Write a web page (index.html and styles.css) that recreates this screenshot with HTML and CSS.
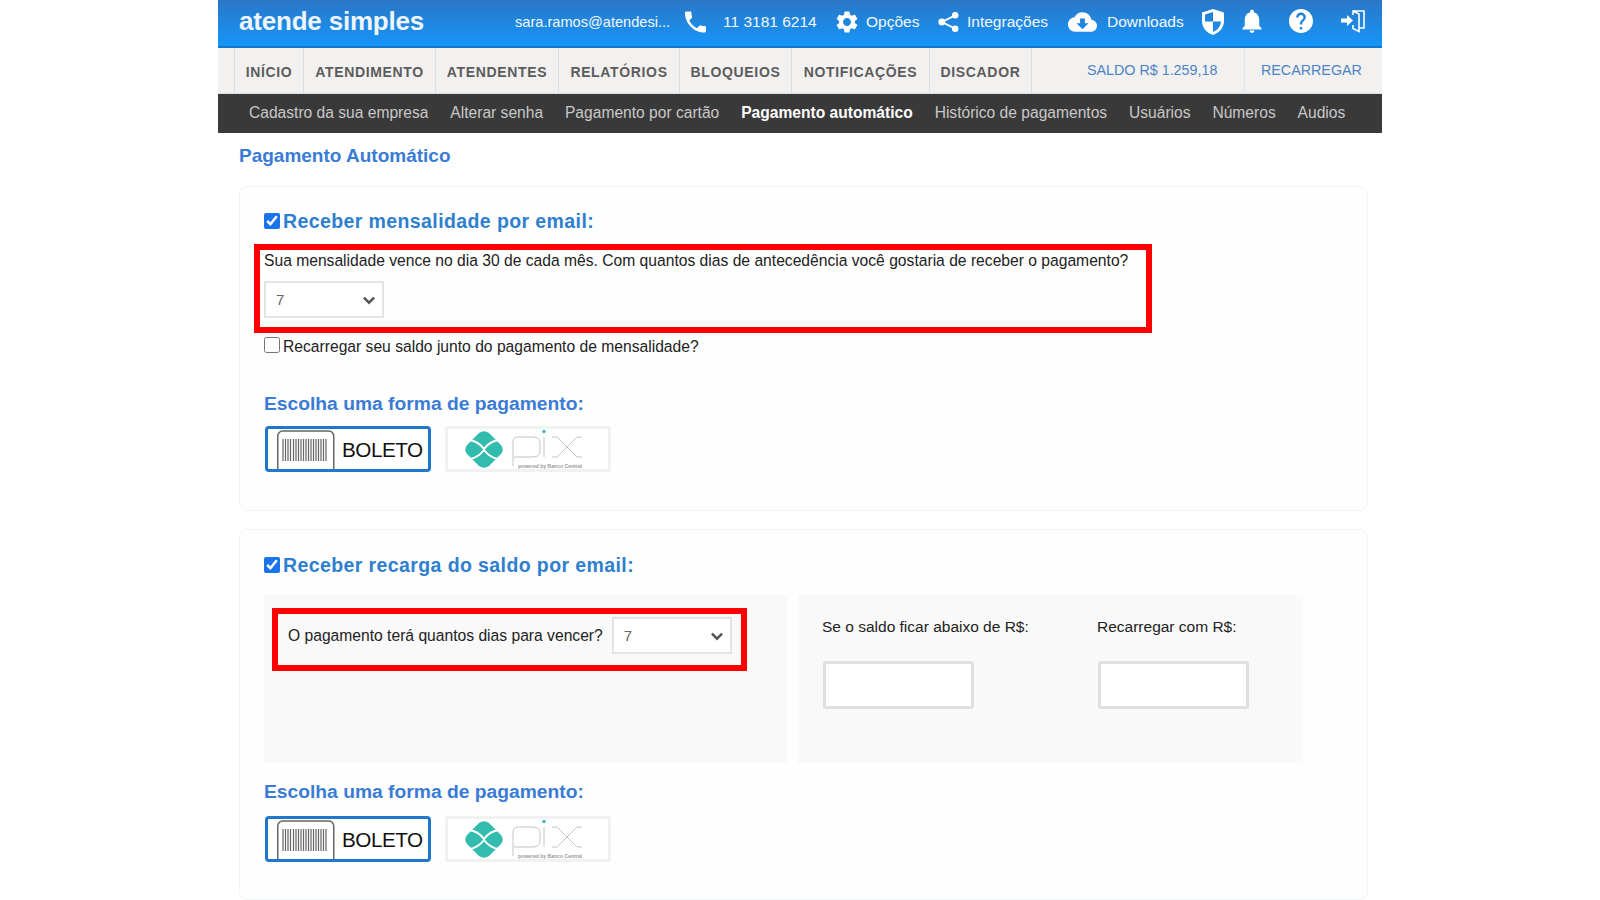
FILE: index.html
```html
<!DOCTYPE html>
<html lang="pt-BR">
<head>
	<meta charset="UTF-8">
	<meta name="viewport" content="width=device-width, initial-scale=1.0">
	<title>Pagamento Automático</title>
	<link rel="stylesheet" href="styles.css">
</head>
<body>
	<div class="page">
		<header class="topbar">
			<div class="logo">atende simples</div>
			<div class="topItems">
				<span class="email">sara.ramos@atendesi...</span>
				<svg class="icon phoneIcon" viewBox="3 3 18 18"><path d="M6.62 10.79c1.44 2.83 3.76 5.14 6.59 6.59l2.2-2.2c.27-.27.67-.36 1.02-.24 1.12.37 2.33.57 3.57.57.55 0 1 .45 1 1V20c0 .55-.45 1-1 1-9.39 0-17-7.61-17-17 0-.55.45-1 1-1h3.5c.55 0 1 .45 1 1 0 1.25.2 2.45.57 3.57.11.35.03.74-.25 1.02l-2.2 2.2z"/></svg>
				<span class="phone">11 3181 6214</span>
				<svg class="icon gearIcon" viewBox="2 2 20 20"><path d="M19.14 12.94c.04-.3.06-.61.06-.94 0-.32-.02-.64-.07-.94l2.03-1.58a.49.49 0 0 0 .12-.61l-1.92-3.32a.488.488 0 0 0-.59-.22l-2.39.96c-.5-.38-1.03-.7-1.62-.94l-.36-2.54a.484.484 0 0 0-.48-.41h-3.84c-.24 0-.43.17-.47.41l-.36 2.54c-.59.24-1.13.57-1.62.94l-2.39-.96c-.22-.08-.47 0-.59.22L2.74 8.87c-.12.21-.08.47.12.61l2.03 1.58c-.05.3-.09.63-.09.94s.02.64.07.94l-2.03 1.58a.49.49 0 0 0-.12.61l1.92 3.32c.12.22.37.29.59.22l2.39-.96c.5.38 1.03.7 1.62.94l.36 2.54c.05.24.24.41.48.41h3.84c.24 0 .44-.17.47-.41l.36-2.54c.59-.24 1.13-.56 1.62-.94l2.39.96c.22.08.47 0 .59-.22l1.92-3.32c.12-.22.07-.47-.12-.61l-2.01-1.58zM12 15.6c-1.98 0-3.6-1.62-3.6-3.6s1.62-3.6 3.6-3.6 3.6 1.62 3.6 3.6-1.62 3.6-3.6 3.6z"/></svg>
				<span class="options">Opções</span>
				<svg class="icon shareIcon" viewBox="0 0 22 22"><circle cx="4" cy="11" r="3.6"/><circle cx="18" cy="4" r="3.4"/><circle cx="18" cy="18" r="3.4"/><path d="M4 11 18 4M4 11l14 7" stroke="#fff" stroke-width="2" fill="none"/></svg>
				<span class="integrations">Integrações</span>
				<svg class="icon cloudIcon" viewBox="0 3 24 18"><path d="M19.35 10.04C18.67 6.59 15.64 4 12 4 9.11 4 6.6 5.64 5.35 8.04 2.34 8.36 0 10.91 0 14c0 3.31 2.69 6 6 6h13c2.76 0 5-2.24 5-5 0-2.64-2.05-4.78-4.65-4.96zM17 13l-5 5-5-5h3V9h4v4h3z"/></svg>
				<span class="downloads">Downloads</span>
				<svg class="icon shieldIcon" viewBox="0 0 22 26"><path d="M11 0 22 3.500V12C22 19 17 24 11 26 5 24 0 19 0 12V3.500zM11 3 3 5.500V12.500H11zM11 12.500V23C15 21.500 18.500 18 19 12.500z" fill-rule="evenodd"/></svg>
				<svg class="icon bellIcon" viewBox="4 2 16 20"><path d="M12 22c1.100 0 2-.9 2-2h-4c0 1.100.89 2 2 2zm6-6v-5c0-3.070-1.640-5.640-4.500-6.320V4c0-.83-.67-1.500-1.500-1.500s-1.500.67-1.500 1.500v.68C7.630 5.360 6 7.920 6 11v5l-2 2v1h16v-1l-2-2z"/></svg>
				<svg class="icon helpIcon" viewBox="2 2 20 20"><path d="M12 2C6.480 2 2 6.480 2 12s4.480 10 10 10 10-4.480 10-10S17.520 2 12 2zm1 17h-2v-2h2v2zm2.070-7.750l-.9.92C13.450 12.900 13 13.500 13 15h-2v-.5c0-1.100.45-2.100 1.170-2.830l1.240-1.260c.37-.36.59-.86.59-1.410 0-1.100-.9-2-2-2s-2 .9-2 2H8c0-2.210 1.790-4 4-4s4 1.790 4 4c0 .88-.36 1.680-.93 2.250z"/></svg>
				<svg class="icon exitIcon" viewBox="0 0 24 24"><path d="M0 9.500H6V6L12 11.500 6 17V13.500H0z"/><path d="M12 6V2H23V19H18M12 2 18 5V22.500L12 19.500V16" fill="none" stroke="#fff" stroke-width="1.600"/></svg>
			</div>
		</header>

		<nav class="mainNav">
			<a class="navItem navInicio">INÍCIO</a>
			<a class="navItem navAtendimento">ATENDIMENTO</a>
			<a class="navItem navAtendentes">ATENDENTES</a>
			<a class="navItem navRelatorios">RELATÓRIOS</a>
			<a class="navItem navBloqueios">BLOQUEIOS</a>
			<a class="navItem navNotificacoes">NOTIFICAÇÕES</a>
			<a class="navItem navDiscador">DISCADOR</a>
			<a class="navBalance">SALDO R$ 1.259,18</a>
			<a class="navRecharge">RECARREGAR</a>
		</nav>

		<nav class="subNav">
			<a>Cadastro da sua empresa</a>
			<a>Alterar senha</a>
			<a>Pagamento por cartão</a>
			<a class="active">Pagamento automático</a>
			<a>Histórico de pagamentos</a>
			<a>Usuários</a>
			<a>Números</a>
			<a>Audios</a>
		</nav>

		<h1 class="pageTitle">Pagamento Automático</h1>

		<section class="card cardMonthly">
			<label class="cardHeading"><input type="checkbox" checked>Receber mensalidade por email:</label>
			<div class="redBox monthlyBox">
				<p class="question">Sua mensalidade vence no dia 30 de cada mês. Com quantos dias de antecedência você gostaria de receber o pagamento?</p>
				<div class="selectWrap">
					<select><option>7</option></select>
					<svg class="chevron" viewBox="0 0 12 8"><path d="M1.500 1.500 6 6l4.500-4.500" fill="none" stroke="#555" stroke-width="2.200"/></svg>
				</div>
			</div>
			<label class="rechargeCheck"><input type="checkbox">Recarregar seu saldo junto do pagamento de mensalidade?</label>
			<h3 class="payHeading">Escolha uma forma de pagamento:</h3>
			<div class="payOptions">
				<div class="payOption selected">
					<svg class="barcode" viewBox="0 0 58 40"><rect x="0.750" y="2" width="56" height="44" rx="5" fill="#fff" stroke="#666" stroke-width="1.500"/><path d="M6 10v22M8.500 10v22M11 10v22M13.500 10v22M16.500 10v22M19 10v22M21.500 10v22M24 10v22M26.500 10v22M29 10v22M31.500 10v22M34 10v22M36.500 10v22M39 10v22M41.500 10v22M44 10v22M46.500 10v22M49 10v22" stroke="#666" stroke-width="1.200"/></svg>
					<span class="boletoText">BOLETO</span>
				</div>
				<div class="payOption pixOption">
					<svg class="pixLogo" viewBox="0 0 160 40"><path d="M31 4Q36 .5 41 4L53 16Q56.500 20.500 53 25L41 37Q36 40.500 31 37L19 25Q15.500 20.500 19 16Z" fill="#32bcad"/><path d="M21 11Q30 12 36 20 42 12 51 11M21 30Q30 29 36 21 42 29 51 30" fill="none" stroke="#fff" stroke-width="2"/><path d="M65 37V13Q65 8 70 8H85Q92 8 92 14V22Q92 28 85 28H66M96 8V28M104 8H109L119 18 129 8H134M104 28H109L119 18 129 28H134" fill="none" stroke="#c4c4c4" stroke-width="1"/><circle cx="96" cy="2.500" r="1.700" fill="#32bcad"/><text x="70" y="39" textLength="64" class="pixCaption">powered by Banco Central</text></svg>
				</div>
			</div>
		</section>

		<section class="card cardRecharge">
			<label class="cardHeading"><input type="checkbox" checked>Receber recarga do saldo por email:</label>
			<div class="panels">
				<div class="panel panelLeft">
					<div class="redBox dueBox">
						<span class="dueLabel">O pagamento terá quantos dias para vencer?</span>
						<div class="selectWrap">
							<select><option>7</option></select>
							<svg class="chevron" viewBox="0 0 12 8"><path d="M1.500 1.500 6 6l4.500-4.500" fill="none" stroke="#555" stroke-width="2.200"/></svg>
						</div>
					</div>
				</div>
				<div class="panel panelRight">
					<div class="field">
						<span>Se o saldo ficar abaixo de R$:</span>
						<input type="text">
					</div>
					<div class="field">
						<span>Recarregar com R$:</span>
						<input type="text">
					</div>
				</div>
			</div>
			<h3 class="payHeading payHeadingSecond">Escolha uma forma de pagamento:</h3>
			<div class="payOptions">
				<div class="payOption selected">
					<svg class="barcode" viewBox="0 0 58 40"><rect x="0.750" y="2" width="56" height="44" rx="5" fill="#fff" stroke="#666" stroke-width="1.500"/><path d="M6 10v22M8.500 10v22M11 10v22M13.500 10v22M16.500 10v22M19 10v22M21.500 10v22M24 10v22M26.500 10v22M29 10v22M31.500 10v22M34 10v22M36.500 10v22M39 10v22M41.500 10v22M44 10v22M46.500 10v22M49 10v22" stroke="#666" stroke-width="1.200"/></svg>
					<span class="boletoText">BOLETO</span>
				</div>
				<div class="payOption pixOption">
					<svg class="pixLogo" viewBox="0 0 160 40"><path d="M31 4Q36 .5 41 4L53 16Q56.500 20.500 53 25L41 37Q36 40.500 31 37L19 25Q15.500 20.500 19 16Z" fill="#32bcad"/><path d="M21 11Q30 12 36 20 42 12 51 11M21 30Q30 29 36 21 42 29 51 30" fill="none" stroke="#fff" stroke-width="2"/><path d="M65 37V13Q65 8 70 8H85Q92 8 92 14V22Q92 28 85 28H66M96 8V28M104 8H109L119 18 129 8H134M104 28H109L119 18 129 28H134" fill="none" stroke="#c4c4c4" stroke-width="1"/><circle cx="96" cy="2.500" r="1.700" fill="#32bcad"/><text x="70" y="39" textLength="64" class="pixCaption">powered by Banco Central</text></svg>
				</div>
			</div>
		</section>
	</div>
</body>
</html>
```

FILE: styles.css
```css
* {
	box-sizing: border-box;
}
body {
	margin: 0;
	background-color: #fff;
	font-family: 'Liberation Sans', Arial, sans-serif;
	color: #222;
	overflow: hidden;
}
p, h1, h3 {
	margin: 0;
}
.page {
	width: 1164px;
	height: 900px;
	margin: 0 auto;
}

/* top bar */
.topbar {
	height: 48px;
	display: flex;
	align-items: center;
	background: linear-gradient(#2a77c6, #1596f9);
	border-bottom: 2px solid #1677c9;
	color: #f4f8fc;
	padding-left: 21px;
}
.logo {
	width: 276px;
	font-size: 26px;
	font-weight: bold;
	letter-spacing: -0.2px;
	color: #eef5fb;
	margin-top: -4px;
}
.topItems {
	display: flex;
	align-items: center;
	font-size: 15.500px;
	margin-top: -2px;
}
.icon {
	fill: #fff;
	display: block;
	flex: none;
}
.email { width: 170px; font-size: 14.6px; }
.phoneIcon { width: 21px; height: 22px; }
.phone { margin-left: 17px; width: 113px; }
.gearIcon { width: 22px; height: 22px; }
.options { margin-left: 8px; width: 72px; }
.shareIcon { width: 21px; height: 22px; }
.integrations { margin-left: 8px; width: 101px; }
.cloudIcon { width: 29px; height: 22px; }
.downloads { margin-left: 10px; width: 95px; }
.shieldIcon { width: 22px; height: 26px; }
.bellIcon { margin-left: 17px; width: 22px; height: 24px; margin-top: -3px; }
.helpIcon { margin-left: 26px; width: 24px; height: 24px; margin-top: -3px; }
.exitIcon { margin-left: 28px; width: 24px; height: 24px; margin-top: -3px; }

/* main nav */
.mainNav {
	height: 46px;
	display: flex;
	align-items: stretch;
	background-color: #f2f1f0;
	border-bottom: 1px solid #ddd;
	padding-left: 16px;
}
.navItem {
	display: flex;
	align-items: center;
	justify-content: center;
	border-left: 1px solid #dfdfdf;
	padding-top: 2px;
	font-size: 14px;
	font-weight: bold;
	letter-spacing: 0.650px;
	color: #5c5c5c;
}
.navInicio { width: 69px; }
.navAtendimento { width: 132px; }
.navAtendentes { width: 123px; }
.navRelatorios { width: 121px; }
.navBloqueios { width: 112px; }
.navNotificacoes { width: 138px; }
.navDiscador { width: 103px; border-right: 1px solid #dfdfdf; }
.navBalance, .navRecharge {
	display: flex;
	align-items: center;
	font-size: 14.300px;
	color: #4d83c4;
	margin-top: -2px;
}
.navBalance {
	width: 212px;
	padding-left: 55px;
}
.navRecharge {
	border-left: 1px solid #e4e4e4;
	margin-top: 0;
	padding: 0 0 2px 16px;
}

/* sub nav */
.subNav {
	height: 39px;
	display: flex;
	align-items: center;
	background-color: #393939;
	padding: 0 0 2px 31px;
	font-size: 15.600px;
	color: #c8c8c8;
	gap: 21.900px;
}
.subNav .active {
	color: #fff;
	font-weight: bold;
}

.pageTitle {
	font-size: 19px;
	font-weight: bold;
	color: #3a7bd5;
	margin: 12px 0 19px 21px;
	line-height: 22px;
}

/* cards */
.card {
	width: 1129px;
	margin-left: 21px;
	border: 1px solid #f1f4f9;
	border-radius: 8px;
	background-color: #fefefe;
	padding: 25px 24px 0;
}
.cardMonthly { height: 325px; margin-bottom: 18px; padding-top: 24px; }
.cardRecharge { height: 371px; }
.cardHeading {
	display: flex;
	align-items: center;
	height: 20px;
	font-size: 19.500px;
	font-weight: bold;
	letter-spacing: 0.400px;
	color: #2f7fcf;
}
input[type="checkbox"] {
	width: 16px;
	height: 16px;
	margin: -1px 3px 0 0;
	accent-color: #1a73e8;
	flex: none;
}
.redBox {
	border: 6px solid #f00;
}
.monthlyBox {
	width: 898px;
	height: 89px;
	margin: 13px 0 0 -10px;
	padding: 0 0 0 4px;
}
.question {
	font-size: 15.650px;
	line-height: 21px;
}
.selectWrap {
	position: relative;
	width: 120px;
	height: 37px;
}
.monthlyBox .selectWrap {
	margin-top: 10px;
}
select {
	width: 100%;
	height: 100%;
	appearance: none;
	border: 2px solid #e4e4e4;
	border-radius: 0;
	background-color: #fff;
	padding: 0 0 0 10px;
	font-family: 'Liberation Sans', Arial, sans-serif;
	font-size: 15px;
	color: #666;
}
.chevron {
	position: absolute;
	right: 8px;
	top: 15px;
	width: 14px;
	height: 9px;
}
.rechargeCheck {
	display: flex;
	align-items: center;
	height: 20px;
	margin-top: 4px;
	font-size: 15.650px;
}
.rechargeCheck input[type="checkbox"] {
	margin-top: -4px;
}
.payHeading {
	font-size: 19.250px;
	font-weight: bold;
	color: #3a7bd5;
	line-height: 22px;
	margin-top: 36px;
}
.payOptions {
	display: flex;
	gap: 14px;
	margin: 11px 0 0 1px;
}
.cardRecharge .payOptions {
	margin-top: 13px;
}
.payOption {
	width: 166px;
	height: 46px;
	display: flex;
	align-items: center;
	border: 3px solid #f1f1f1;
	border-radius: 3px;
	background-color: #fff;
	padding-left: 9px;
}
.payOption.selected {
	border-color: #2277cc;
	border-radius: 4px;
}
.pixOption {
	padding-left: 0;
}
.barcode {
	width: 58px;
	height: 40px;
	flex: none;
}
.boletoText {
	margin: 1px 0 0 7px;
	font-size: 20.700px;
	letter-spacing: -0.500px;
	color: #111;
}
.pixLogo {
	width: 160px;
	height: 40px;
}
.pixCaption {
	font-size: 5px;
	font-weight: bold;
	fill: #999;
}

/* recharge panels */
.panels {
	display: flex;
	gap: 11px;
	margin-top: 20px;
}
.panel {
	height: 168px;
	background-color: #f9f9f9;
}
.panelLeft {
	width: 523px;
	padding: 13px 0 0 8px;
}
.dueBox {
	width: 475px;
	height: 63px;
	display: flex;
	align-items: center;
	padding: 0 0 8px 10px;
	gap: 9px;
}
.dueLabel {
	font-size: 15.650px;
}
.panelRight {
	width: 505px;
	display: flex;
	padding: 23px 0 0 24px;
}
.field {
	width: 275px;
	flex: none;
	font-size: 15.500px;
}
.field input {
	display: block;
	width: 151px;
	height: 48px;
	margin: 25px 0 0 1px;
	border: 3px solid #e0e0e0;
	border-radius: 3px;
	background-color: #fff;
}
.payHeadingSecond {
	margin-top: 18px;
}
```
